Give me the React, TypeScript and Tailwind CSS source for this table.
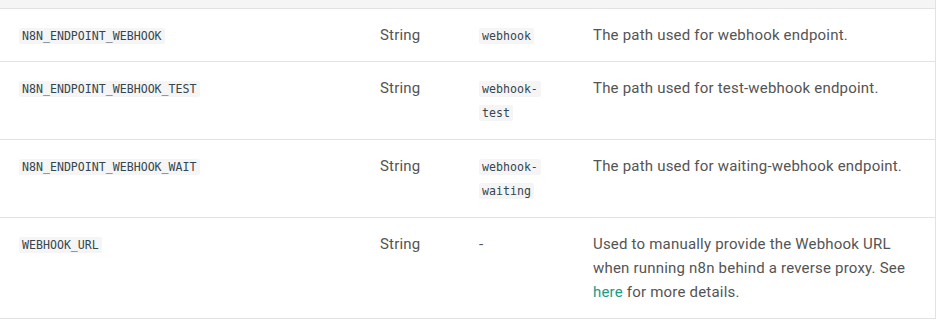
const rows = [
  {
    name: "N8N_ENDPOINT_WEBHOOK",
    type: "String",
    def: "webhook",
    tall: false,
    desc: <>The path used for webhook endpoint.</>,
  },
  {
    name: "N8N_ENDPOINT_WEBHOOK_TEST",
    type: "String",
    def: "webhook-test",
    tall: true,
    desc: <>The path used for test-webhook endpoint.</>,
  },
  {
    name: "N8N_ENDPOINT_WEBHOOK_WAIT",
    type: "String",
    def: "webhook-waiting",
    tall: true,
    desc: <>The path used for waiting-webhook endpoint.</>,
  },
  {
    name: "WEBHOOK_URL",
    type: "String",
    def: null,
    tall: false,
    desc: (
      <>
        Used to manually provide the Webhook URL when running n8n behind a reverse proxy. See{" "}
        <a href="#" className="text-[#1a9a84]">
          here
        </a>{" "}
        for more details.
      </>
    ),
  },
];

function Code({ children }: { children: React.ReactNode }) {
  return (
    <code className="rounded-[2px] bg-[#f5f5f5] px-[3px] py-[1px] font-['DejaVu_Sans_Mono',monospace] text-[11.6px] leading-none tracking-normal text-[#36464e] [box-decoration-break:clone]">
      {children}
    </code>
  );
}

export default function App() {
  return (
    <div className="h-[330px] w-[938px] bg-white font-['Roboto',sans-serif] text-[15px] leading-6 tracking-[0.2px] text-[#545454]">
      <div className="w-[936px] border-r border-[#e2e2e2]">
        <div className="h-[9px] border-b border-[#e2e2e2] bg-[#f5f5f5]" />
        <table className="w-full table-fixed border-collapse">
          <colgroup>
            <col className="w-[360px]" />
            <col className="w-[99px]" />
            <col className="w-[114px]" />
            <col />
          </colgroup>
          <tbody>
            {rows.map((r) => (
              <tr key={r.name} className="border-b border-[#e2e2e2] align-top">
                <td className="py-[14px] pl-[19px] pr-5">
                  <Code>{r.name}</Code>
                </td>
                <td className="px-5 py-[14px]">{r.type}</td>
                <td className={r.tall ? "break-words pt-[14px] pb-[15px] pl-5 pr-[18px]" : "break-words py-[14px] pl-5 pr-[18px]"}>
                  {r.def ? <Code>{r.def}</Code> : "-"}
                </td>
                <td className="py-[14px] pl-5 pr-[16px]">{r.desc}</td>
              </tr>
            ))}
          </tbody>
        </table>
      </div>
    </div>
  );
}
